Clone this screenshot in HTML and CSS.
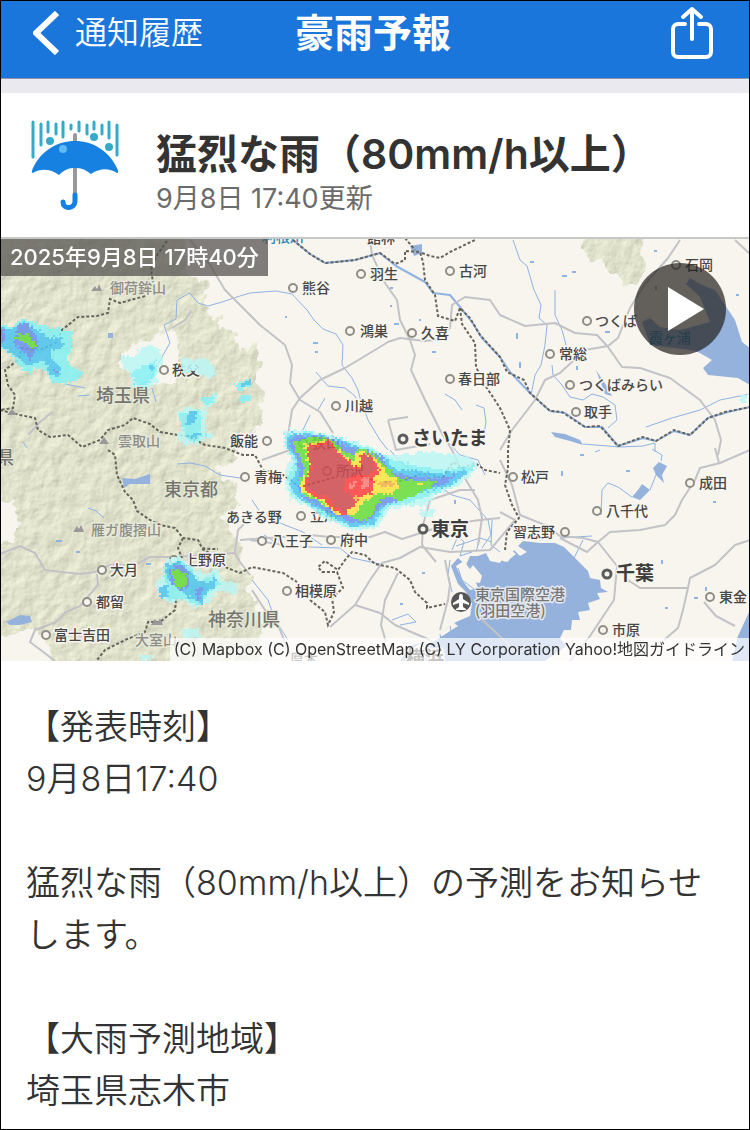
FILE: index.html
```
<!DOCTYPE html>
<html lang="ja">

<head>
    <meta charset="UTF-8">
    <meta name="viewport" content="width=device-width, initial-scale=1.0">
    <title>豪雨予報</title>
    <link rel="stylesheet" href="styles.css">
</head>

<body>
    <header class="navbar">
        <a class="back" href="#">
            <svg class="back-icon" viewBox="0 0 26 44" aria-hidden="true"><path d="M24 2 3 22l21 20" /></svg>
            通知履歴
        </a>
        <h1 class="navbar-title">豪雨予報</h1>
        <button class="share" type="button" aria-label="共有">
            <svg viewBox="0 0 42 52" aria-hidden="true">
                <path d="M14 17H7a5 5 0 0 0-5 5v23a5 5 0 0 0 5 5h28a5 5 0 0 0 5-5V22a5 5 0 0 0-5-5h-7" />
                <path d="M21 32V2M12 10l9-8 9 8" />
            </svg>
        </button>
    </header>

    <main>
        <section class="summary">
            <svg class="umbrella" viewBox="0 0 90 92" aria-hidden="true">
                <path class="drops" d="M3 3v35M11 5v21M18 3v10M26 5v10M33 3v15M41 6v4M49 3v9M57 6v9M64 3v7M72 6v9M79 3v16M87 6v30" />
                <g class="splash">
                    <circle cx="20" cy="22" r="4" />
                    <circle cx="64" cy="18" r="4" />
                    <circle cx="79" cy="28" r="4" />
                </g>
                <path class="pole" d="M45 16v60" />
                <path class="canopy" d="M3 54C1 54 2 51 3 49 11 32 27 22 45 22s34 10 42 27c1 2 2 5 0 5-8-5-17-5-26 1-5-4-9-6-14-6h-4c-5 0-10 3-14 7-8-6-18-7-26-2z" />
                <circle class="shine" cx="33" cy="30" r="4" />
                <path class="handle" d="M45 76v6c0 8-12 9-12 1" />
            </svg>
            <div class="summary-text">
                <h2 class="summary-title">猛烈な雨（80mm/h以上）</h2>
                <p class="summary-time">9月8日 17:40更新</p>
            </div>
        </section>

        <section class="map">
            <svg class="map-base" viewBox="1 239 748 422" role="img" aria-label="雨雲レーダー">
                <defs>
                    <filter id="relief" x="0" y="0" width="100%" height="100%" color-interpolation-filters="sRGB">
                        <feTurbulence type="fractalNoise" baseFrequency="0.07" numOctaves="4" seed="4" result="noise" />
                        <feDisplacementMap in="SourceGraphic" in2="noise" scale="22" xChannelSelector="R" yChannelSelector="G" result="ground" />
                        <feDiffuseLighting in="noise" surfaceScale="1" diffuseConstant="1" lighting-color="#f9fbe2" result="light">
                            <feDistantLight azimuth="225" elevation="64" />
                        </feDiffuseLighting>
                        <feComposite in="light" in2="ground" operator="in" />
                    </filter>
                </defs>

                <rect class="land" x="0" y="238" width="750" height="424" />

                <!-- mountains -->
                <g class="terrain" filter="url(#relief)">
                    <path fill-rule="evenodd" d="M-20 218H186L187 276 200 274 207 290 203 302 214 318 230 335 243 352 257 342 259 380 262 420 252 432 235 438 242 458 217 470 238 490 234 505 224 518 240 545 236 562 250 578 256 604 264 640 258 680H60L45 638 30 628 -20 640V550L12 545 18 520 14 500 -20 500zM122 350 150 337 165 324 178 340 180 368 170 385 142 384 125 370z" />
                    <path d="M583 225H648L641 255 647 268 639 280 620 287 609 275 600 262 584 250z" />
                </g>

                <!-- sea and lakes -->
                <g class="water">
                    <path d="M451 566 458 558 466 565 470 556 478 556 486 553 490 561 500 563 503 557 508 562 514 550 520 556 527 552 518 546 523 541 540 543 555 543 564 547 588 571 590 578 600 580 601 588 608 592 597 593 600 599 588 603 590 610 578 612 580 620 572 620 571 630 564 630 560 638 566 646 545 661H400L412 645 430 640 456 622 470 616 472 604 466 592 458 584z" />
                    <path d="M642 322 650 318 660 327 680 330 710 322 700 297 686 284 690 278 704 286 715 290 727 308 735 320 742 342 750 348V385L738 378 708 375 703 368 712 360 698 352 690 350 650 345z" />
                    <path d="M122 478 135 479 150 474 150 484 130 484 124 488zM6 622 20 615 30 616 32 622 20 625 10 625zM632 497 638 490 642 484 650 490 640 500zM653 468 659 462 667 466 662 475 664 483 656 475zM551 432 565 434 580 440 583 445 570 441 555 437zM410 246 422 244 422 253 414 256zM596 370 606 385 612 396 605 394zM108 333 113 333 113 338 108 338zM750 610 738 636 732 661H750z" />
                </g>
                <path class="island" d="M456 566 464 561 472 572 478 588 470 590 462 580zM467 573 473 565 482 576 480 583 474 582zM500 560 511 550 516 554 506 562zM416 646 446 629 453 622 458 626 436 640 422 650z" />

                <!-- rivers -->
                <g class="river">
                    <path d="M137 386 150 380 163 355 170 343 167 334 164 325 176 319 177 300 190 293 198 303 208 306 222 302 240 296 250 293 276 291 292 294 307 310 314 320 323 329 336 334 343 345 342 365 352 378 358 390 360 398 368 420 380 440 388 450" />
                    <path d="M316 372 328 386 345 388 355 396 362 410M303 430 310 415M325 398 318 410" />
                    <path d="M513 240 520 260 527 266 534 290 541 305 539 318 547 325 545 345 541 365 535 375 531 395M555 290 555 315 562 330 566 345M552 365 553 375 562 385 570 397 583 400 592 394 603 397 615 405 617 420 608 428" />
                    <path d="M646 427 672 418 700 410 720 400 735 397 750 394M583 444 620 447 643 446 655 443 655 452M595 452 600 450" />
                    <path d="M601 515 602 490 608 483 618 487 632 497M650 490 654 480 658 470M661 461 662 455 652 449M574 558 583 540M560 538 592 536" />
                    <path d="M177 464 190 463 205 466 220 475 240 478M264 535 280 545 310 547 340 548 352 558 380 564" />
                    <path d="M252 500 262 515 285 525 303 532 322 545M252 580 268 600 275 620 288 640M390 450 400 462 430 480 452 495 470 500 488 520 491 535 482 548M446 440 460 455 478 460 485 475" />
                    <path d="M476 405 484 408 486 422 483 440M392 620 408 614 416 622 400 625M445 394 455 400 462 410M65 384 85 388M78 396 90 395M88 508 96 511 104 518M152 388 156 402M23 442 27 448" />
                    <path d="M450 560 448 575 452 592M452 550 458 536 464 542 460 556 472 552M456 546 480 538M476 552 480 538 492 542M492 520 491 545 500 552M458 568 462 580 478 592 484 602 474 620 474 661" />
                    <path d="M430 652 432 640M442 645 440 634M452 636 450 626" />
                </g>
                <path class="tone" d="M293 240 310 254 325 263 355 260 380 253 396 266 425 282 433 293 450 295 460 307 472 322 482 338 500 357 510 372 530 393 550 411 565 413 585 427 602 427 618 446 643 438 656 441 674 431 690 435 708 418 728 412 750 407" />
                <path class="specks" d="M286 316v2M390 288h3M390 306h2M313 343h5M315 352h3M432 352h4M394 324h5M420 319v2M562 276h5M572 272h4M530 262h4M605 332h5M656 286v4M700 260v3M736 295h3M577 366v4M520 362v6M654 251h3M517 333v6M562 471v5M580 455h4M626 471h4M713 502h3M662 560v4M694 598h4M665 608h3M706 587v4M56 541h6M400 604h3M76 552h4M146 564h5M455 500v4M422 573h3" />

                <!-- roads -->
                <g class="road">
                    <path d="M190 240 210 265 225 290 245 310 260 325 285 345 292 365 290 383 300 400 320 412 333 433M28 435 40 422 52 412M172 328 185 320 191 311" />
                    <path d="M370 240 372 255 385 283 397 300 400 320 410 340 415 355 411 370 425 400 440 430 452 450 466 480 478 500 482 518 478 545" />
                    <path d="M288 435 292 410 300 398 320 380 345 368 375 350 388 342 400 338 425 341 435 340 450 328 452 305 465 297 490 300 500 315 525 326 555 323 575 333 597 335 608 347 622 367 640 368 670 378 700 400 715 420 721 440 718 455" />
                    <path d="M680 240 668 258 645 284 630 308 618 338 608 346 585 350 560 373 545 380 535 400 512 430 500 450M735 240 750 254M388 420 408 417M388 420 396 450 430 444" />
                    <path d="M0 554 20 546 35 553 45 570 80 574 95 572 110 565 135 565 150 557 175 557 235 553 240 562 250 575M97 574 98 585 80 606 66 612 56 622 35 630 30 642 42 651 55 661M235 552 238 530 248 520" />
                    <path d="M500 460 512 485 520 515 545 525 560 536 583 538 598 542 610 532 640 530 665 525 675 515 682 500 695 480 700 468 720 463 750 450M719 463 715 448M598 542 617 566 614 600 590 636 570 661M628 580 640 588 688 588 690 578 715 565 735 545 750 540M688 588 683 610 678 628 664 640M560 538 587 552 598 542" />
                    <path d="M240 540 310 535 330 537 370 537 385 532 402 539 430 530 450 524 480 520 500 518M430 500 423 525 422 545 436 562M330 627 355 605 370 580 382 563 400 558 420 547 450 552 490 550 515 520 500 512M355 605 380 613 395 625 430 640M398 573 385 600 381 625 386 642M445 560 450 585 448 600 440 630M430 500 460 490 475 490M476 614 520 655" />
                    <path d="M262 460 290 450M252 590 265 610 278 625 290 655M284 545 250 540M704 602 716 616 735 626" />
                </g>

                <!-- prefectural borders -->
                <g class="border">
                    <path d="M167 241 155 258 151 270 153 282M145 296 120 303 110 299 108 313 97 316 78 317 62 330 56 343 40 350 22 348 18 360 5 370 8 385 15 395 13 408 0 410M0 410 20 415 35 418 38 430 50 437 68 435 82 447 100 440 108 430 125 425 133 418 150 424 160 432 190 437 205 445 225 448 243 455 255 455 263 470 283 475 300 487 325 480 350 473 380 482 400 481 425 473 442 478 453 462 462 468 475 463 485 470 500 473" />
                    <path d="M108 450 115 455 117 475 125 492 133 500 137 511 150 520 160 525 175 528 183 538 198 540 202 548 210 549 218 549M183 538 178 548 182 558M176 600 175 610 160 622 148 622 145 632 125 640 105 650 97 660M202 549 215 556 225 567 240 573 252 567 283 573 297 582M310 600 325 612 328 625 334 612 332 598 343 588 337 572 322 572 318 567 325 561 338 570 345 560 352 552 365 555 375 564 395 568 410 580 415 592 427 603 427 608 445 604" />
                    <path d="M293 240 310 254 325 263 355 260 380 253 395 264 405 260 405 251 420 252 423 262 425 280 435 295 438 316 455 321 460 308 470 318 480 335 500 357 507 372 524 380 530 393 550 411 562 412 585 427 600 426 618 446 643 437 656 441 674 430 690 435 708 418 725 412 750 407" />
                    <path d="M460 308 462 324 475 343 476 367 485 385 500 408 510 430 508 450 508 468 505 485 512 505 519 518 507 532 505 550M405 238 415 250M422 253 430 256 440 258 450 252 475 240" />
                </g>

                <!-- peaks -->
                <path class="peak" d="M91 291 95 286 97 289 99 284 102 291zM7 415 12 409 17 415zM99 444 104 437 109 444zM73 532 77 526 79 529 81 525 84 532zM151 625 155 619 158 622 160 618 163 625z" />

                <g class="spot">
                    <circle cx="293" cy="288" r="4" />
                    <circle cx="361" cy="274" r="4" />
                    <circle cx="450" cy="271" r="4" />
                    <circle cx="350" cy="331" r="4" />
                    <circle cx="412" cy="333" r="4" />
                    <circle cx="450" cy="379" r="4" />
                    <circle cx="336" cy="406" r="4" />
                    <circle cx="164" cy="370" r="4" />
                    <circle cx="267" cy="441" r="4" />
                    <circle cx="676" cy="265" r="4" />
                    <circle cx="587" cy="321" r="4" />
                    <circle cx="550" cy="354" r="4" />
                    <circle cx="570" cy="385" r="4" />
                    <circle cx="576" cy="412" r="4" />
                    <circle cx="513" cy="477" r="4" />
                    <circle cx="690" cy="483" r="4" />
                    <circle cx="597" cy="511" r="4" />
                    <circle cx="565" cy="532" r="4" />
                    <circle cx="710" cy="597" r="4" />
                    <circle cx="603" cy="630" r="4" />
                    <circle cx="245" cy="477" r="4" />
                    <circle cx="303" cy="443" r="4" />
                    <circle cx="327" cy="471" r="4" />
                    <circle cx="301" cy="516" r="4" />
                    <circle cx="262" cy="541" r="4" />
                    <circle cx="331" cy="540" r="4" />
                    <circle cx="287" cy="591" r="4" />
                    <circle cx="174" cy="560" r="4" />
                    <circle cx="102" cy="570" r="4" />
                    <circle cx="87" cy="602" r="4" />
                    <circle cx="46" cy="635" r="4" />
                </g>
                <g class="spot spot-main">
                    <circle cx="403" cy="439" r="4" />
                    <circle cx="423" cy="529" r="4" />
                    <circle cx="607" cy="574" r="4" />
                </g>

                <g class="label">
                    <text x="302" y="293">熊谷</text>
                    <text x="370" y="279">羽生</text>
                    <text x="459" y="276">古河</text>
                    <text x="360" y="336">鴻巣</text>
                    <text x="421" y="338">久喜</text>
                    <text x="458" y="384">春日部</text>
                    <text x="345" y="411">川越</text>
                    <text x="172" y="375">秩父</text>
                    <text x="230" y="446">飯能</text>
                    <text x="685" y="270">石岡</text>
                    <text x="595" y="326">つくば</text>
                    <text x="559" y="359">常総</text>
                    <text x="579" y="390">つくばみらい</text>
                    <text x="584" y="417">取手</text>
                    <text x="521" y="482">松戸</text>
                    <text x="699" y="488">成田</text>
                    <text x="606" y="516">八千代</text>
                    <text x="513" y="537">習志野</text>
                    <text x="719" y="602">東金</text>
                    <text x="612" y="635">市原</text>
                    <text x="254" y="482">青梅</text>
                    <text x="312" y="448">狭山</text>
                    <text x="336" y="476">所沢</text>
                    <text x="310" y="521">立川</text>
                    <text x="226" y="522">あきる野</text>
                    <text x="271" y="546">八王子</text>
                    <text x="340" y="545">府中</text>
                    <text x="295" y="596">相模原</text>
                    <text x="184" y="565">上野原</text>
                    <text x="110" y="575">大月</text>
                    <text x="96" y="607">都留</text>
                    <text x="54" y="640">富士吉田</text>
                    <text x="367" y="243">館林</text>
                    <text x="290" y="664">厚木</text>
                </g>
                <g class="label label-city">
                    <text x="412" y="445">さいたま</text>
                    <text x="431" y="536">東京</text>
                    <text x="616" y="580">千葉</text>
                    <text x="406" y="665">横浜</text>
                </g>
                <g class="label label-pref">
                    <text x="96" y="402">埼玉県</text>
                    <text x="164" y="496">東京都</text>
                    <text x="208" y="626">神奈川県</text>
                    <text x="-40" y="464">山梨県</text>
                </g>
                <g class="label label-peak">
                    <text x="110" y="293">御荷鉾山</text>
                    <text x="118" y="446">雲取山</text>
                    <text x="91" y="535">雁ガ腹摺山</text>
                    <text x="135" y="645">大室山</text>
                </g>
                <g class="label label-port">
                    <text x="475" y="600">東京国際空港</text>
                    <text x="475" y="616">(羽田空港)</text>
                </g>
                <g class="label label-water">
                    <text x="649" y="343">霞ヶ浦</text>
                    <text x="262" y="242">利根川</text>
                </g>
                <circle class="airport" cx="461" cy="602" r="10" />
                <path class="plane" d="M461 594c2 0 2 2 2 5l6 4v2l-6-2v4l3 2v1h-10v-1l3-2v-4l-6 2v-2l6-4c0-3 0-5 2-5z" />
            </svg>

            <canvas class="radar" id="radar" width="374" height="211"></canvas>

            <p class="map-time">2025年9月8日 17時40分</p>
            <button class="play" type="button" aria-label="再生">
                <svg viewBox="0 0 36 44" aria-hidden="true"><path d="M0 0v44l36-22z" /></svg>
            </button>
            <p class="map-credit">(C) Mapbox (C) OpenStreetMap (C) LY Corporation Yahoo!<a href="#">地図ガイドライン</a></p>
        </section>

        <article class="detail">
            <h3>【発表時刻】</h3>
            <p>9月8日17:40</p>
            <p class="detail-block">猛烈な雨（80mm/h以上）の予測をお知らせします。</p>
            <h3 class="detail-block">【大雨予測地域】</h3>
            <p>埼玉県志木市</p>
        </article>
    </main>

    <script src="radar.js"></script>
</body>

</html>
```
FILE: styles.css
```
* {
    box-sizing: border-box;
}

body {
    margin: 0;
    min-height: 100vh;
    border: 1px solid #000;
    background-color: #fff;
    color: #333;
    font-family: Inter, "Noto Sans CJK JP", sans-serif;
}

h1,
h2,
h3,
p {
    margin: 0;
    font-weight: normal;
}

/* navigation bar */
.navbar {
    display: grid;
    grid-template-columns: 1fr auto 1fr;
    align-items: center;
    height: 78px;
    padding: 0 36px 14px 32px;
    border-bottom: 1px solid #8f96a3;
    background-color: #1b76db;
    color: #fff;
}

.back {
    display: flex;
    align-items: center;
    gap: 16px;
    font-size: 32px;
    font-weight: 350;
    line-height: 40px;
    color: #fff;
    text-decoration: none;
}

.back-icon {
    width: 26px;
    height: 44px;
    fill: none;
    stroke: #fff;
    stroke-width: 6;
}

.navbar-title {
    font-size: 39px;
    font-weight: 700;
    line-height: 48px;
}

.share {
    justify-self: end;
    padding: 0;
    border: none;
    background: none;
    cursor: pointer;
}

.share svg {
    display: block;
    width: 42px;
    height: 52px;
    fill: none;
    stroke: #fff;
    stroke-width: 4;
    stroke-linecap: round;
    stroke-linejoin: round;
    overflow: visible;
}

/* summary */
.summary {
    display: flex;
    align-items: flex-start;
    gap: 36px;
    padding: 24px 29px 20px;
    border-top: 14px solid #e9e9ef;
    border-bottom: 2px solid #c8c8c8;
}

.umbrella {
    width: 90px;
    height: 96px;
    flex: none;
}

.drops {
    stroke: #35abcc;
    stroke-width: 3;
    stroke-linecap: round;
}

.splash {
    fill: #35abcc;
}

.pole {
    stroke: #999;
    stroke-width: 4;
    stroke-linecap: round;
}

.canopy {
    fill: #1781e2;
}

.shine {
    fill: #5fbaf5;
}

.handle {
    fill: none;
    stroke: #1781e2;
    stroke-width: 5;
    stroke-linecap: round;
}

.summary-text {
    padding-top: 10px;
}

.summary-title {
    font-size: 41px;
    font-weight: 600;
    line-height: 54px;
}

.summary-time {
    font-size: 27px;
    line-height: 36px;
    color: #6b6b6b;
}

/* map */
.map {
    position: relative;
    overflow: hidden;
}

.map-base {
    display: block;
    width: 100%;
}

.land,
.island {
    fill: #f7f5ee;
}

.terrain {
    fill: #dbe0c6;
}

.water {
    fill: #94b2db;
}

.river,
.tone,
.specks {
    fill: none;
    stroke: #8fb3e4;
    stroke-linejoin: round;
}

.tone,
.specks {
    stroke-width: 2;
}

.road {
    fill: none;
    stroke: #c3c3c7;
    stroke-width: 2;
    stroke-linejoin: round;
}

.border {
    fill: none;
    stroke: #67645c;
    stroke-width: 2;
    stroke-dasharray: 3 2;
}

.peak {
    fill: #999;
}

.spot {
    fill: #f7f5ee;
    stroke: #8f8e86;
    stroke-width: 2;
}

.spot-main {
    stroke: #5c5c5c;
    stroke-width: 3;
}

.label {
    font-family: "Noto Sans CJK JP", sans-serif;
    font-size: 14px;
    font-weight: 500;
    fill: #474747;
    stroke: #f7f5ee;
    stroke-width: 3;
    stroke-linejoin: round;
    paint-order: stroke;
}

.label-city {
    font-size: 19px;
    font-weight: 700;
    fill: #3d3d3d;
}

.label-pref {
    font-size: 18px;
    fill: #75756e;
    stroke: #e6e9d8;
    stroke-width: 2;
}

.label-peak {
    fill: #8d8d88;
    stroke: #e6e9d8;
}

.label-port {
    fill: #777;
    stroke: #e4e8ee;
    font-size: 15px;
}

.label-water {
    fill: #2e86b5;
    stroke: none;
}

.airport {
    fill: #555;
}

.plane {
    fill: #fff;
}

.radar {
    position: absolute;
    top: 0;
    left: 0;
    width: 100%;
    height: 100%;
    opacity: 0.86;
    image-rendering: pixelated;
}

.map-time {
    position: absolute;
    top: 0;
    left: 0;
    padding: 0 9px;
    background-color: rgba(80, 78, 76, 0.72);
    color: #fff;
    font-size: 22px;
    font-weight: 500;
    line-height: 37px;
}

.play {
    position: absolute;
    top: 24px;
    right: 23px;
    display: flex;
    align-items: center;
    justify-content: center;
    width: 92px;
    height: 92px;
    padding: 0 0 0 12px;
    border: none;
    border-radius: 50%;
    background-color: rgba(35, 33, 30, 0.7);
    cursor: pointer;
}

.play svg {
    width: 36px;
    height: 44px;
    fill: #fff;
}

.map-credit {
    position: absolute;
    right: 0;
    bottom: 0;
    padding: 0 4px;
    background-color: rgba(255, 255, 255, 0.7);
    font-size: 16px;
    line-height: 23px;
    white-space: nowrap;
}

.map-credit a {
    color: inherit;
    text-decoration: none;
}

/* message */
.detail {
    padding: 40px 25px 12px;
    font-size: 34px;
    line-height: 52px;
}

.detail h3 {
    font-size: inherit;
}

.detail p,
.detail h3 {
    font-weight: 350;
}

.detail .detail-block {
    margin-top: 52px;
}
```
FILE: radar.js
```
// Rain intensity, weakest first. Each area is a list of x,y pairs on the map.
const bands = [
    { color: '#bcf6f4', areas: [
        '121,355 132,357 148,344 158,348 164,360 157,372 158,382 146,388 132,386 130,372 122,366',
        '180,358 194,360 206,358 217,372 210,378 196,372 182,374',
        '175,412 190,406 202,410 206,396 216,394 216,402 206,408 206,432 214,436 196,444 184,446 176,436 182,424',
        '283,433 290,429 312,431 345,439 370,447 385,456 405,454 430,452 465,456 478,464 470,476 455,488 436,494 428,506 405,506 388,510 378,528 350,530 325,518 308,506 290,499 286,484 284,470 292,458 284,445',
        '420,510 434,508 434,516 422,516',
        '155,582 163,576 162,562 180,556 190,566 206,574 218,568 222,580 238,584 236,594 216,590 210,602 196,608 184,600 168,602 160,596',
        '180,630 198,628 200,638 184,638', '140,656 152,654 152,660 140,660', '740,396 748,394 746,402 740,402'
    ] },
    { color: '#86f1f3', areas: [
        '0,324 12,326 25,318 38,324 55,328 72,332 72,350 66,358 72,366 84,374 78,380 62,384 52,382 46,370 34,368 30,374 18,366 10,352 0,350',
        '132,372 146,364 156,360 156,374 148,384 134,384',
        '178,414 200,410 202,422 198,434 210,432 192,442 186,436',
        '200,398 216,395 214,402 204,404', '234,384 250,380 254,384 240,390', '240,396 252,394 250,402 242,402',
        '284,434 310,432 345,440 372,450 392,460 420,466 440,470 478,465 458,482 440,492 410,503 388,506 374,526 350,527 324,515 305,504 291,494 288,478 294,460 286,446',
        '158,590 166,584 164,566 178,560 190,568 200,582 214,574 220,584 210,592 200,606 184,598 168,600'
    ] },
    { color: '#50c6f0', areas: [
        '0,326 10,330 22,322 36,328 50,338 62,336 64,348 52,350 50,358 60,368 58,378 50,374 44,360 34,364 28,366 14,354 0,346',
        '150,364 155,364 155,370 150,370', '188,414 198,410 196,422 186,426', '188,436 200,432 196,438 190,440',
        '238,386 250,380 252,384 240,388',
        '285,438 292,433 318,434 345,442 370,452 388,460 396,470 418,470 440,474 462,470 468,472 452,484 430,490 400,500 384,506 373,524 352,526 328,514 306,503 294,494 290,484 297,470 295,456 287,446',
        '164,564 178,562 190,570 198,582 208,582 216,576 216,586 206,592 202,604 190,598 180,590 170,582',
        '160,588 168,586 168,598 160,596'
    ] },
    { color: '#6a92ee', areas: [
        '0,328 4,330 4,342 0,342',
        '18,324 28,324 36,334 40,342 34,354 30,360 22,350 14,344',
        '288,440 296,436 330,437 348,446 368,450 384,458 390,472 416,477 440,478 458,474 446,484 424,490 398,501 382,506 371,520 352,523 332,514 306,500 297,490 300,474 298,458 291,448',
        '168,570 178,564 188,570 190,584 182,592 172,584', '196,590 202,588 200,600 196,598', '54,368 58,370 57,374 54,374'
    ] },
    { color: '#67dc3a', areas: [
        '14,338 22,333 30,336 36,344 34,350 24,342',
        '293,442 302,438 330,438 342,450 352,455 358,448 372,452 382,462 398,478 410,480 438,480 430,488 412,496 400,502 388,496 376,504 372,516 362,521 350,516 335,514 325,506 302,494 299,482 304,470 300,456 295,450',
        '171,572 178,568 186,574 188,582 182,590 175,586'
    ] },
    { color: '#ffe340', areas: [
        '304,444 330,440 340,452 354,462 358,451 372,455 382,466 386,474 396,478 398,488 390,494 376,494 368,500 360,505 356,515 342,516 330,510 322,502 300,490 302,480 309,470 306,456',
        '418,483 428,484 420,487', '176,578 178,578 178,580 176,580'
    ] },
    { color: '#ff3f3f', areas: [
        '307,446 330,441 340,454 354,466 360,465 360,452 371,456 380,470 374,478 373,492 362,497 354,506 344,514 330,508 324,500 310,494 303,488 306,478 311,470 308,458'
    ] },
    { color: '#cf4b52', areas: [
        '309,447 322,444 331,444 337,453 348,464 356,470 362,466 362,455 370,457 377,470 366,474 352,476 345,482 344,490 352,496 355,504 346,512 334,507 328,498 314,492 306,487 309,476 313,470 308,460'
    ] },
    { color: '#fb7a76', areas: ['362,478 368,476 370,486 362,490', '350,484 356,480 356,488 352,490'] },
    { color: '#f5b04a', areas: ['378,484 386,480 394,484 384,488', '354,496 358,494 358,502 354,502'] }
];

const cell = 2;
const originX = 1;
const originY = 239;
const canvas = document.getElementById('radar');
const ctx = canvas.getContext('2d');

function noise(x, y) {
    const n = Math.sin(x * 12.9898 + y * 78.233) * 43758.5453;
    return (n - Math.floor(n) - 0.5) * 3;
}

bands.forEach(band => {
    ctx.fillStyle = band.color;
    band.areas.forEach(area => {
        const path = new Path2D('M' + area.split(' ').join('L') + 'Z');
        for (let row = 0; row < canvas.height; row++) {
            for (let col = 0; col < canvas.width; col++) {
                const x = originX + col * cell + 1 + noise(col, row);
                const y = originY + row * cell + 1 + noise(row, col);
                if (ctx.isPointInPath(path, x, y)) {
                    ctx.fillRect(col, row, 1, 1);
                }
            }
        }
    });
});
```
